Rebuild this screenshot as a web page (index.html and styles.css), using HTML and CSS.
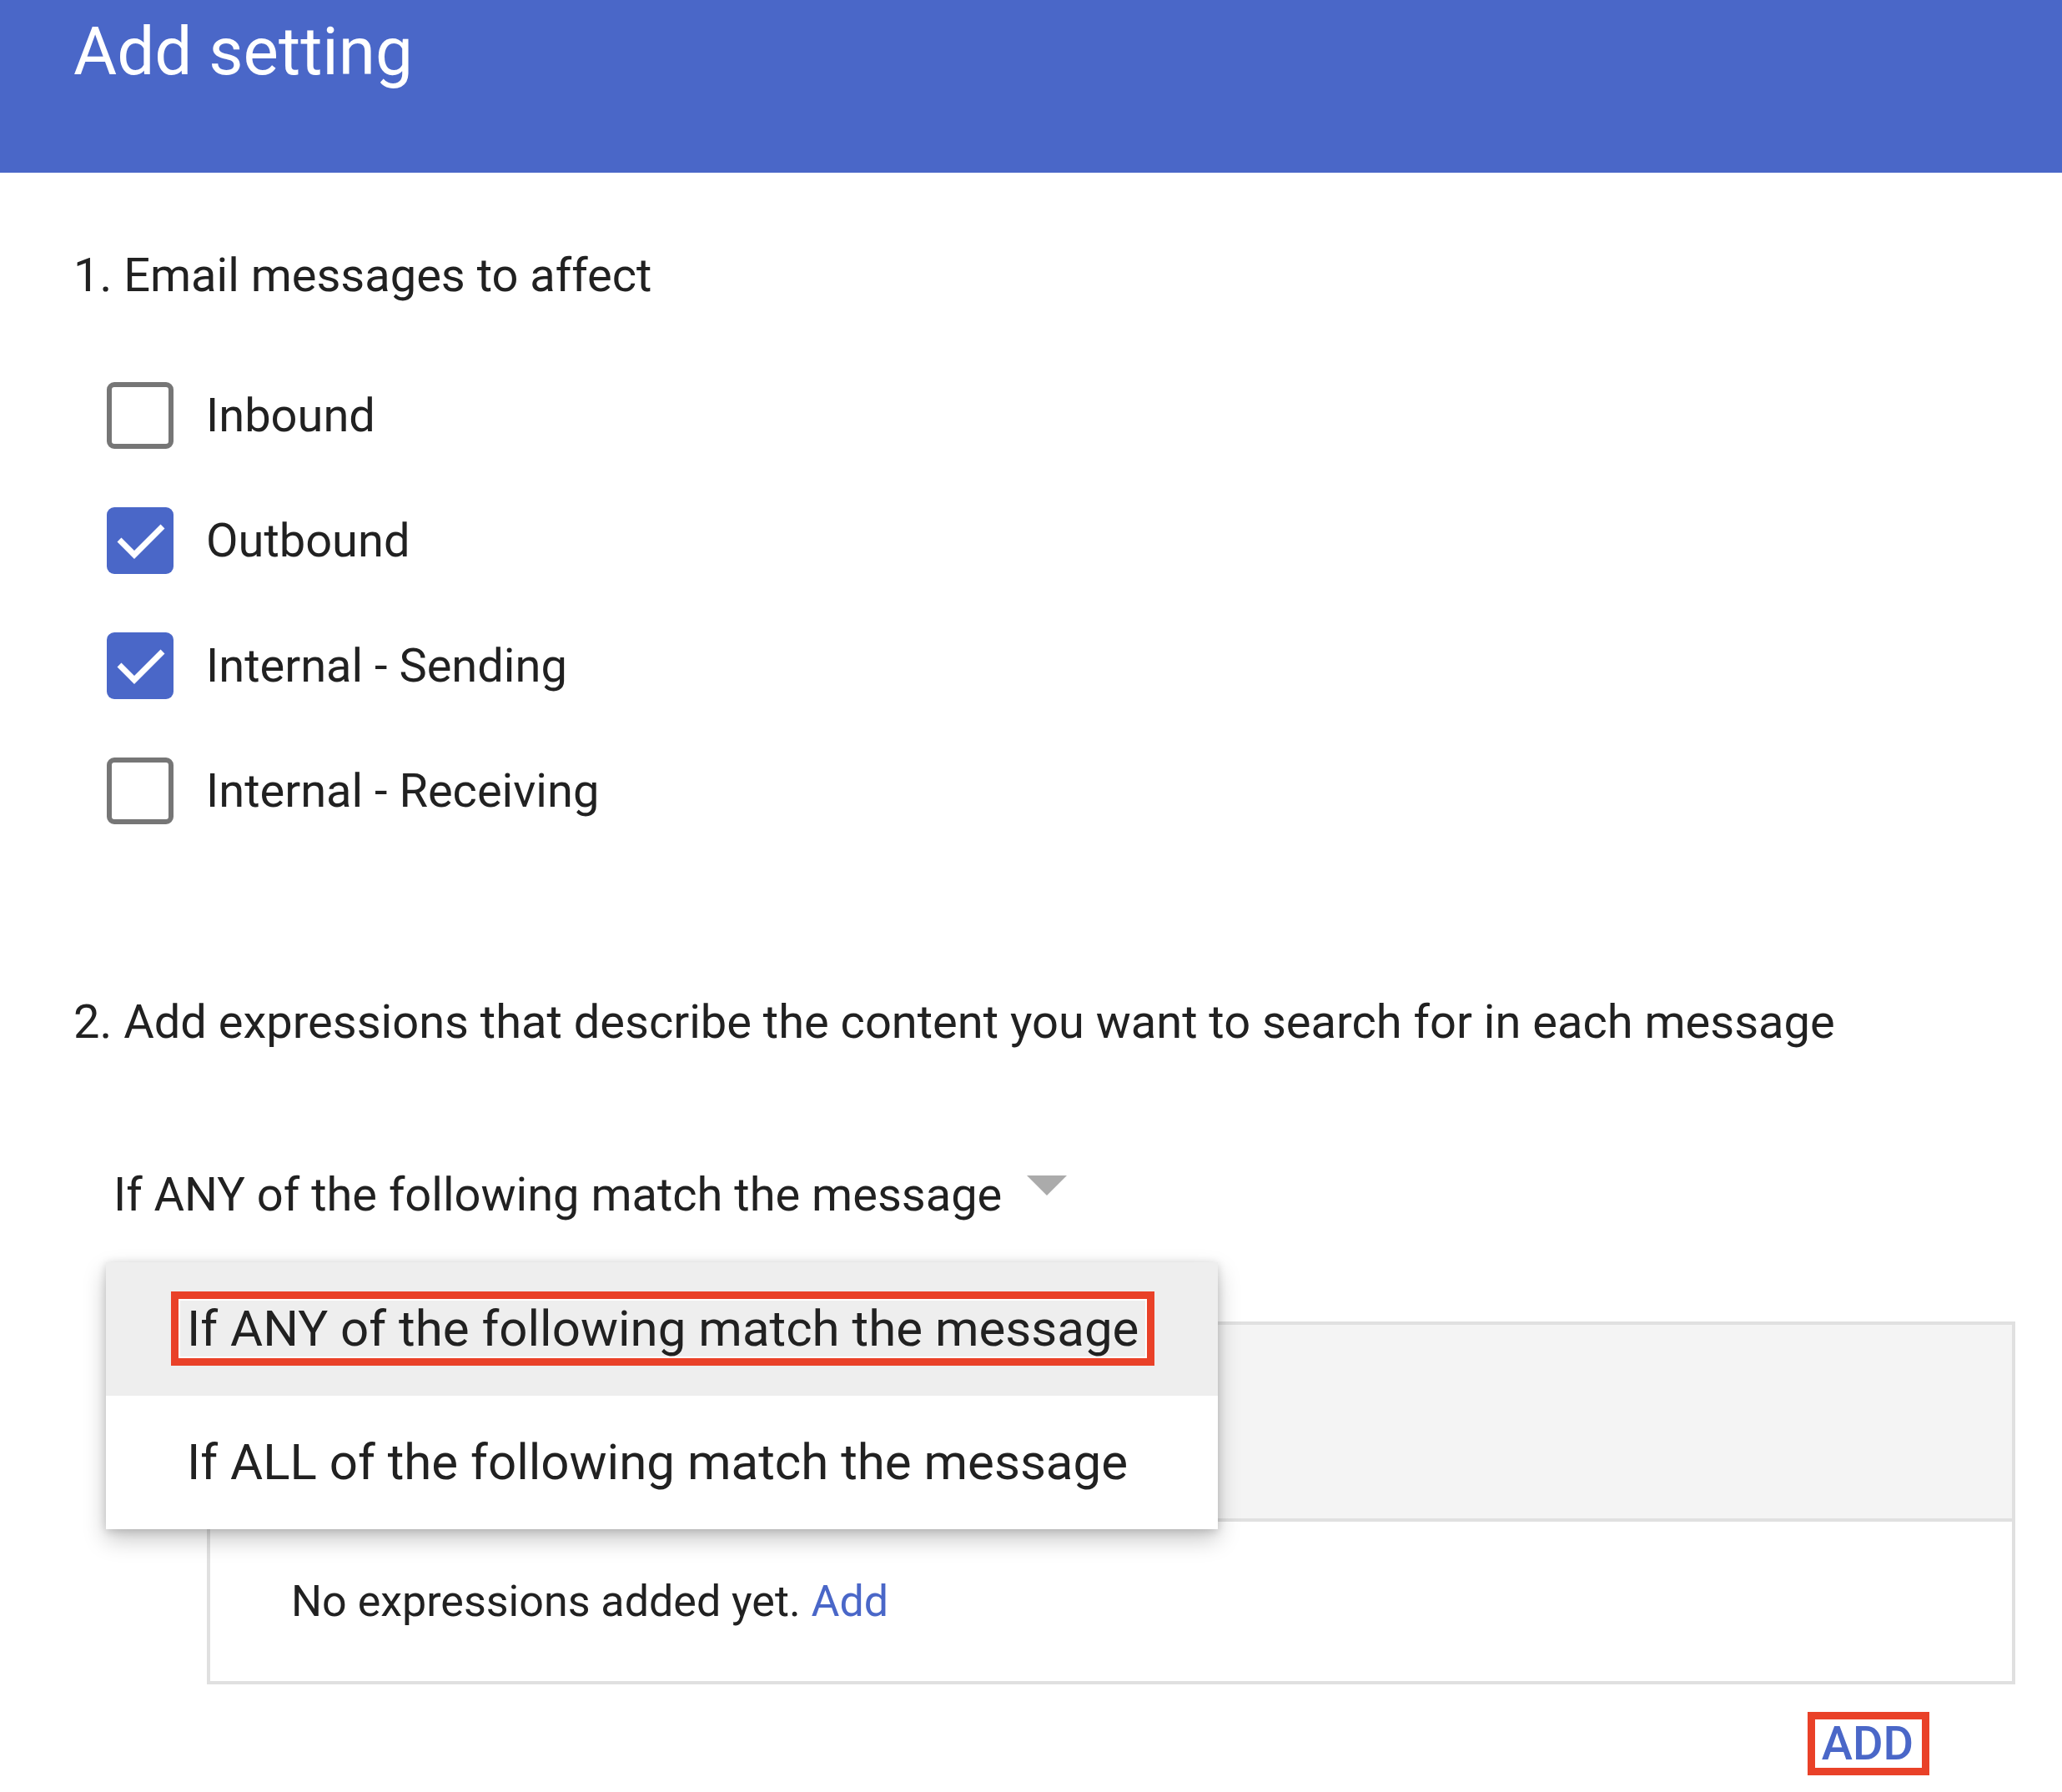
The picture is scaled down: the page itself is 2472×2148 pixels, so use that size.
FILE: index.html
```html
<!DOCTYPE html>
<html lang="en">
<head>
<meta charset="utf-8">
<title>Add setting</title>
<link rel="stylesheet" href="styles.css">
</head>
<body>
<header class="header">
  <h1 class="header-title">Add setting</h1>
</header>
<main class="content">
  <h2 class="section-title section-title--first">1. Email messages to affect</h2>
  <ul class="checklist">
    <li class="check-row"><span class="checkbox"></span><span class="check-label">Inbound</span></li>
    <li class="check-row"><span class="checkbox checkbox--on"><svg viewBox="0 0 80 80" class="checkmark"><path d="M15 39 L33 57 L67 23" /></svg></span><span class="check-label">Outbound</span></li>
    <li class="check-row"><span class="checkbox checkbox--on"><svg viewBox="0 0 80 80" class="checkmark"><path d="M15 39 L33 57 L67 23" /></svg></span><span class="check-label">Internal - Sending</span></li>
    <li class="check-row"><span class="checkbox"></span><span class="check-label">Internal - Receiving</span></li>
  </ul>

  <h2 class="section-title section-title--second">2. Add expressions that describe the content you want to search for in each message</h2>

  <div class="dropdown">
    <div class="dropdown-value">
      <span class="dropdown-text">If ANY of the following match the message</span>
      <span class="dropdown-arrow"></span>
    </div>
    <ul class="menu">
      <li class="menu-item menu-item--active"><span class="annot">If ANY of the following match the message</span></li>
      <li class="menu-item">If ALL of the following match the message</li>
    </ul>
  </div>

  <div class="expr-box">
    <div class="expr-head"></div>
    <div class="expr-body">No expressions added yet. <a class="link">Add</a></div>
  </div>

  <div class="actions">
    <span class="add-btn">ADD</span>
  </div>
</main>
</body>
</html>
```

FILE: styles.css
```css
* { box-sizing: border-box; }

html, body {
  margin: 0;
  padding: 0;
  background: #ffffff;
}

body {
  font-family: Roboto, "Liberation Sans", Arial, sans-serif;
  color: #212121;
  width: 2472px;
}

.header {
  height: 207px;
  background: #4a67c8;
  padding: 22px 0 0 88px;
}

.header-title {
  margin: 0;
  font-size: 80px;
  line-height: 80px;
  font-weight: 400;
  color: #ffffff;
}

.content {
  padding: 0 56px 0 88px;
}

.section-title {
  margin: 0;
  font-size: 56px;
  line-height: 56px;
  font-weight: 400;
  color: #212121;
}

.section-title--first { padding-top: 95px; }
.section-title--second { margin-top: 209px; }

.checklist {
  list-style: none;
  margin: 100px 0 0 0;
  padding: 0 0 0 40px;
  display: flex;
  flex-direction: column;
  gap: 70px;
}

.check-row {
  display: flex;
  align-items: center;
  height: 80px;
  gap: 39px;
}

.checkbox {
  width: 80px;
  height: 80px;
  flex: none;
  border: 6px solid #767676;
  border-radius: 9px;
  background: #fff;
  position: relative;
}

.checkbox--on {
  border: none;
  background: #4a67c8;
}

.checkmark {
  width: 80px;
  height: 80px;
  display: block;
}

.checkmark path {
  fill: none;
  stroke: #ffffff;
  stroke-width: 7;
  stroke-linecap: butt;
  stroke-linejoin: miter;
}

.check-label {
  font-size: 56px;
  line-height: 56px;
}

.dropdown {
  position: relative;
  margin-top: 151px;
}

.dropdown-value {
  display: flex;
  align-items: flex-start;
  padding-left: 48px;
  gap: 30px;
}

.dropdown-text {
  font-size: 56px;
  line-height: 56px;
}

.dropdown-arrow {
  margin-top: 5px;
  width: 0;
  height: 0;
  border-left: 24px solid transparent;
  border-right: 24px solid transparent;
  border-top: 24px solid #ababab;
}

.menu {
  position: absolute;
  z-index: 5;
  left: 39px;
  top: 109px;
  width: 1333px;
  margin: 0;
  padding: 0;
  list-style: none;
  background: #ffffff;
  box-shadow: 0 2px 10px rgba(0, 0, 0, 0.16), 0 12px 26px rgba(0, 0, 0, 0.22);
}

.menu-item {
  height: 160px;
  line-height: 160px;
  font-size: 60px;
  padding-left: 97px;
  white-space: nowrap;
  color: #212121;
}

.menu-item--active {
  background: #eeeeee;
  padding-left: 78px;
}

.annot {
  border: 9px solid #e94128;
  padding: 0 10px 0 10px;
  box-shadow: inset 0 0 0 2px #ffffff;
}

.expr-box {
  margin: 124px 0 0 160px;
  border: 4px solid #e0e0e0;
}

.expr-head {
  height: 236px;
  background: #f4f4f4;
  border-bottom: 4px solid #e0e0e0;
}

.expr-body {
  height: 191px;
  padding-left: 97px;
  display: flex;
  align-items: center;
  font-size: 52px;
  line-height: 52px;
  white-space: pre;
}

.link {
  color: #4a67c8;
  text-decoration: none;
}

.actions {
  display: flex;
  justify-content: flex-end;
  padding: 33px 103px 0 0;
}

.add-btn {
  border: 9px solid #e94128;
  padding: 0 10px 0 8px;
  font-size: 56px;
  line-height: 58px;
  font-weight: 500;
  color: #4a67c8;
  background: #fff;
}
```
